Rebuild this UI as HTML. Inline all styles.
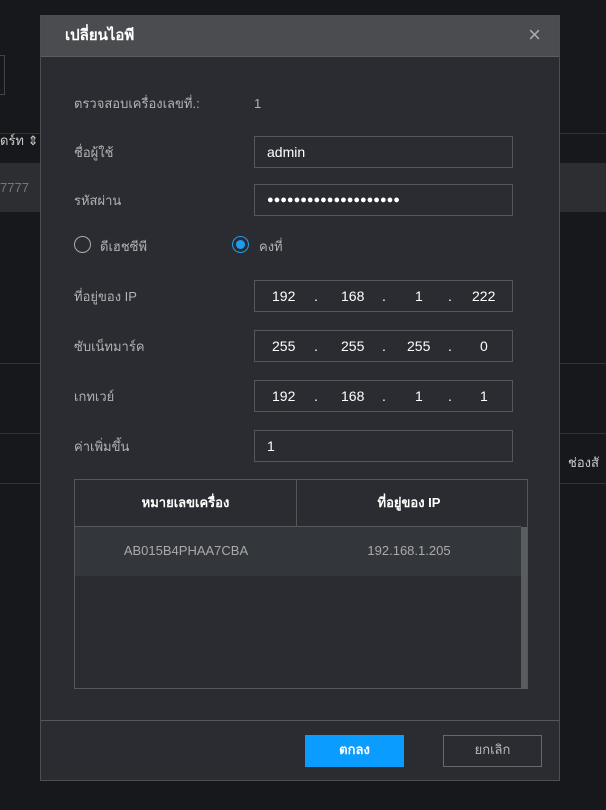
<!DOCTYPE html>
<html><head><meta charset="utf-8"><style>
*{box-sizing:border-box;margin:0;padding:0}
body{width:606px;height:810px;background:#17181c;font-family:"Liberation Sans","Noto Sans CJK SC",sans-serif;font-size:13px;color:#c8c9cc;position:relative;overflow:hidden}
.bg{position:absolute}
.dlg{position:absolute;left:40px;top:15px;width:520px;height:766px;background:#2a2c31;border:1px solid #4c4e52}
.hd{height:41px;background:#4a4c50;border-bottom:1px solid #5a5c60;color:#fff;font-weight:bold;font-size:15px;padding:7px 0 0 24px}
.x{position:absolute;right:18px;top:8px;font-size:22px;color:#aaa;font-weight:normal}
.lbl{position:absolute;left:33px;color:#b0b2b6}
.inp{position:absolute;left:213px;width:259px;height:32px;border:1px solid #55575b;background:#2a2c31;color:#fff;padding:7px 12px;font-size:14px}
.ip span{position:absolute;top:7px}
.radio{position:absolute;width:17px;height:17px;border:1px solid #aaa;border-radius:50%}
.tbl{position:absolute;left:33px;top:463px;width:454px;height:210px;border:1px solid #55575b}
.btn{position:absolute;top:719px;height:32px;width:99px;text-align:center;padding-top:4px;font-weight:bold}
</style></head><body>
<div class="bg" style="left:0;top:55px;width:5px;height:40px;border:1px solid #444;border-left:none"></div>
<div class="bg" style="left:0;top:133px;width:606px;height:1px;background:#333"></div>
<div class="bg" style="left:0;top:163px;width:606px;height:49px;background:#2c2e32"></div>
<div class="bg" style="left:0;top:130px;color:#ccc;font-size:13px">ดร์ท ⇕</div>
<div class="bg" style="left:0;top:180px;color:#777">7777</div>
<div class="bg" style="left:0;top:363px;width:606px;height:1px;background:#333"></div>
<div class="bg" style="left:0;top:433px;width:606px;height:1px;background:#333"></div>
<div class="bg" style="left:0;top:483px;width:606px;height:1px;background:#333"></div>
<div class="bg" style="left:568px;top:452px;color:#ccc">ช่องสั</div>
<div class="dlg">
<div class="hd">เปลี่ยนไอพี<span class="x" style="top:6px">×</span></div>
<div class="lbl" style="top:77px">ตรวจสอบเครื่องเลขที่.:</div>
<div class="lbl" style="left:213px;top:80px">1</div>
<div class="lbl" style="top:126px">ชื่อผู้ใช้</div>
<div class="inp" style="top:120px">admin</div>
<div class="lbl" style="top:174px">รหัสผ่าน</div>
<div class="inp" style="top:168px;font-size:11px;padding-top:9px">●●●●●●●●●●●●●●●●●●●●</div>
<div class="radio" style="left:33px;top:220px"></div><div class="lbl" style="left:59px;top:220px">ดีเฮชซีพี</div>
<div class="radio" style="left:191px;top:220px;border-color:#1e9cf0"><div style="position:absolute;left:3px;top:3px;width:9px;height:9px;border-radius:50%;background:#1e9cf0"></div></div><div class="lbl" style="left:218px;top:220px">คงที่</div>
<div class="lbl" style="top:270px">ที่อยู่ของ IP</div>
<div class="inp ip" style="top:264px"><span style="left:17px">192</span><span style="left:59px">.</span><span style="left:86px">168</span><span style="left:127px">.</span><span style="left:160px">1</span><span style="left:193px">.</span><span style="left:217px">222</span></div>
<div class="lbl" style="top:320px">ซับเน็ทมาร์ค</div>
<div class="inp ip" style="top:314px"><span style="left:17px">255</span><span style="left:59px">.</span><span style="left:86px">255</span><span style="left:127px">.</span><span style="left:152px">255</span><span style="left:193px">.</span><span style="left:225px">0</span></div>
<div class="lbl" style="top:370px">เกทเวย์</div>
<div class="inp ip" style="top:364px"><span style="left:17px">192</span><span style="left:59px">.</span><span style="left:86px">168</span><span style="left:127px">.</span><span style="left:160px">1</span><span style="left:193px">.</span><span style="left:225px">1</span></div>
<div class="lbl" style="top:420px">ค่าเพิ่มขึ้น</div>
<div class="inp" style="top:414px">1</div>
<div class="tbl">
<div style="position:absolute;left:0;top:0;width:446px;height:47px;border-bottom:1px solid #55575b;font-weight:bold;color:#fff">
<div style="position:absolute;left:0;width:222px;height:46px;border-right:1px solid #55575b;text-align:center;padding-top:12px">หมายเลขเครื่อง</div>
<div style="position:absolute;left:222px;width:224px;text-align:center;padding-top:12px">ที่อยู่ของ IP</div></div>
<div style="position:absolute;left:0;top:47px;width:446px;height:49px;background:#33363a;color:#aaa">
<div style="position:absolute;left:0;width:222px;text-align:center;top:16px">AB015B4PHAA7CBA</div>
<div style="position:absolute;left:222px;width:224px;text-align:center;top:16px">192.168.1.205</div></div>
<div style="position:absolute;right:0;top:47px;width:6px;height:162px;background:#5a5d60"></div>
</div>
<div style="position:absolute;left:0;top:704px;width:518px;height:1px;background:#55575b"></div>
<div class="btn" style="left:264px;background:#0b9cff;color:#fff">ตกลง</div>
<div class="btn" style="left:402px;border:1px solid #66686c;color:#bbb;padding-top:3px;font-weight:normal">ยกเลิก</div>
</div>
</body></html>
